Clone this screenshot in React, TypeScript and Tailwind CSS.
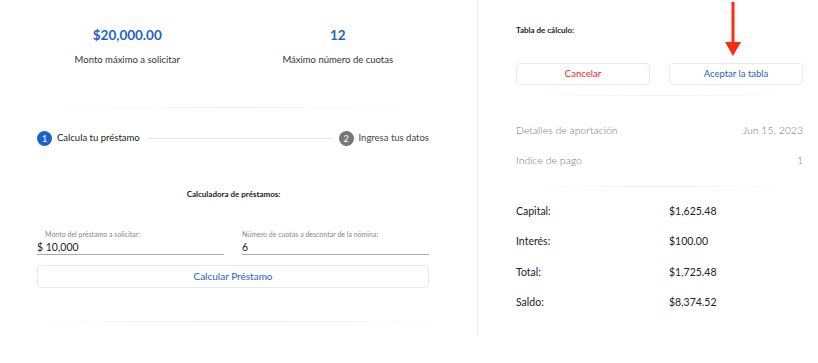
import React from 'react';

// =============================================================================
// Data
// =============================================================================

const SUMMARY = [
  { label: 'Capital:', value: '$1,625.48' },
  { label: 'Interés:', value: '$100.00' },
  { label: 'Total:', value: '$1,725.48' },
  { label: 'Saldo:', value: '$8,374.52' },
];

const FONT = { fontFamily: 'Lato, "Noto Sans", sans-serif' };

// =============================================================================
// Left: calculator
// =============================================================================

function Stat({ value, label }: { value: string; label: string }) {
  return (
    <div className="flex flex-col items-center">
      <span className="text-[13.5px] leading-5 font-bold text-[#1a64c8]">{value}</span>
      <span className="mt-[9px] text-[9.5px] leading-3 text-[#333]">{label}</span>
    </div>
  );
}

function Calculator() {
  return (
    <div className="w-[478px] shrink-0 border-r border-[#ececf0] h-[336px] flex flex-col">
      <div className="grid grid-cols-2 pl-[22px] pr-[34px] pt-[25px]">
        <Stat value="$20,000.00" label="Monto máximo a solicitar" />
        <Stat value="12" label="Máximo número de cuotas" />
      </div>

      <div className="ml-[45px] mr-[56px] mt-[41px] h-px bg-gradient-to-r from-transparent via-[#eef0f6] to-transparent" />

      {/* Stepper */}
      <div className="ml-[37px] mr-[48px] mt-[23px] flex items-center gap-[5px] text-[9.5px]">
        <span className="w-[15px] h-[15px] rounded-full bg-[#1a64c8] text-white text-[9px] flex items-center justify-center">
          1
        </span>
        <span className="text-[#222]">Calcula tu préstamo</span>
        <span className="flex-1 h-px bg-[#e6e8ee] mx-[2px]" />
        <span className="w-[15px] h-[15px] rounded-full bg-[#777] text-white text-[9px] flex items-center justify-center">
          2
        </span>
        <span className="text-[#444]">Ingresa tus datos</span>
      </div>

      <h3 className="mt-[42px] text-center pr-[10px] text-[8px] font-bold text-[#222]">
        Calculadora de préstamos:
      </h3>

      {/* Inputs */}
      <div className="ml-[37px] mr-[48px] mt-[29px] grid grid-cols-2 gap-[18px]">
        <div className="border-b border-[#a9a9a9]">
          <div className="pl-[8px] text-[7px] text-[#888]">Monto del préstamo a solicitar:</div>
          <div className="text-[10.5px] text-[#222] leading-[14px]">$ 10,000</div>
        </div>
        <div className="border-b border-[#a9a9a9]">
          <div className="text-[7px] text-[#888]">Número de cuotas a descontar de la nómina:</div>
          <div className="text-[10.5px] text-[#222] leading-[14px]">6</div>
        </div>
      </div>

      <button
        type="button"
        className="ml-[37px] mr-[48px] mt-[10px] h-[23px] rounded border border-[#e8e9ee] text-[10px] text-[#1a64c8]"
      >
        Calcular Préstamo
      </button>

      <div className="mx-[10px] mt-[33px] h-px bg-gradient-to-r from-transparent via-[#e8eaf4] to-transparent" />
    </div>
  );
}

// =============================================================================
// Right: results table
// =============================================================================

function Results() {
  return (
    <div className="relative flex-1 h-[336px] pl-[38px] pr-[15px] pt-[24px]">
      {/* Annotation arrow */}
      <svg className="absolute left-[247px] top-[2px]" width="16" height="55" viewBox="0 0 16 55">
        <rect x="6.5" y="0" width="3" height="41" fill="#fb2a12" />
        <polygon points="0,40 16,40 8,54" fill="#fb2a12" />
      </svg>

      <h3 className="text-[8px] font-bold text-[#222]">Tabla de cálculo:</h3>

      <div className="mt-[27px] grid grid-cols-2 gap-[19px]">
        <button
          type="button"
          className="h-[22px] rounded border border-[#e8e9ee] text-[9.5px] text-[#f2242a]"
        >
          Cancelar
        </button>
        <button
          type="button"
          className="h-[22px] rounded border border-[#e8e9ee] text-[9.5px] text-[#1a64c8]"
        >
          Aceptar la tabla
        </button>
      </div>

      <div className="mx-[12px] mt-[10px] h-px bg-gradient-to-r from-transparent via-[#eef0f8] to-transparent" />

      <div className="mt-[27px] flex justify-between text-[10.5px] font-light text-[#777]">
        <span>Detalles de aportación</span>
        <span>Jun 15, 2023</span>
      </div>
      <div className="mt-[14px] flex justify-between text-[10.5px] font-light text-[#777]">
        <span>Indice de pago</span>
        <span>1</span>
      </div>

      <div className="mt-[17px] h-px bg-gradient-to-r from-transparent via-[#eef0f8] to-transparent" />

      <div className="mt-[17px] flex flex-col gap-[15.5px]">
        {SUMMARY.map((row) => (
          <div key={row.label} className="flex text-[10.5px] leading-[15px] text-[#222]">
            <span className="w-[153px]">{row.label}</span>
            <span>{row.value}</span>
          </div>
        ))}
      </div>
    </div>
  );
}

// =============================================================================
// App
// =============================================================================

export default function App() {
  return (
    <div className="w-[818px] h-[363px] bg-white flex overflow-hidden" style={FONT}>
      <Calculator />
      <Results />
    </div>
  );
}
